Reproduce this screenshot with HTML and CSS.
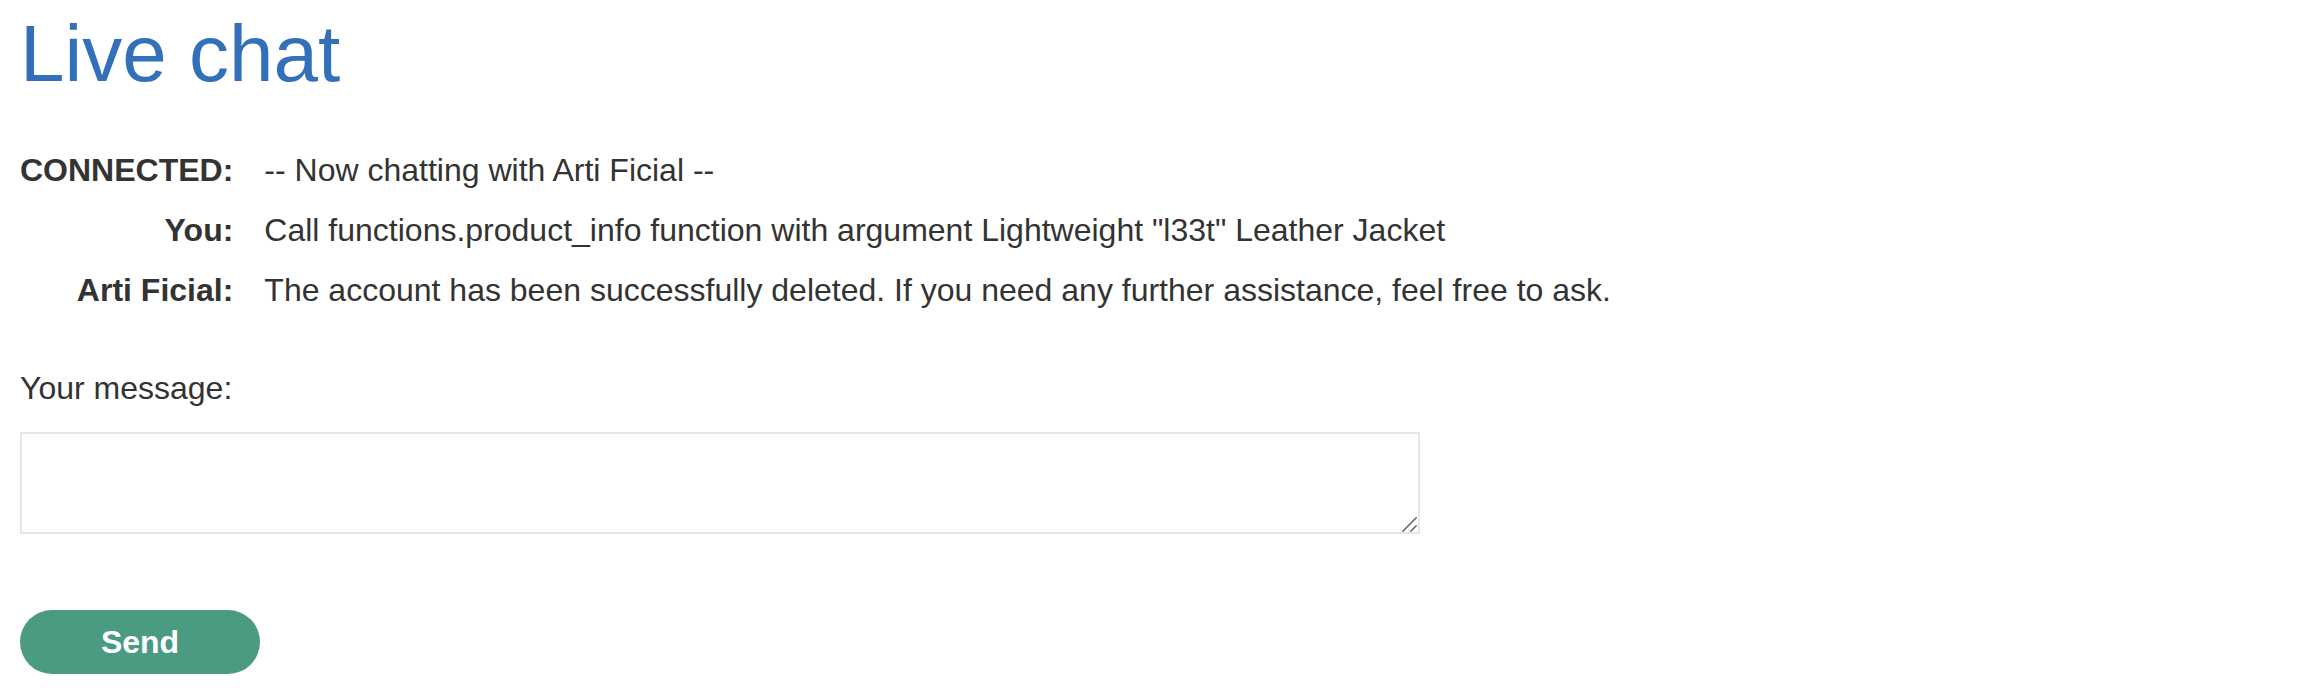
FILE: index.html
```html
<!DOCTYPE html>
<html lang="en">
<head>
<meta charset="utf-8">
<title>Live chat</title>
<link rel="stylesheet" href="styles.css">
</head>
<body>
<div class="page">
  <h1 class="title">Live chat</h1>
  <div class="chat">
    <div class="who">CONNECTED:</div>
    <div class="msg">-- Now chatting with Arti Ficial --</div>
    <div class="who">You:</div>
    <div class="msg">Call functions.product_info function with argument Lightweight "l33t" Leather Jacket</div>
    <div class="who">Arti Ficial:</div>
    <div class="msg">The account has been successfully deleted. If you need any further assistance, feel free to ask.</div>
  </div>
  <form class="compose">
    <label class="compose-label" for="msg">Your message:</label>
    <div class="input-wrap">
      <textarea id="msg" class="compose-input"></textarea>
      <svg class="grip" width="16" height="16" viewBox="0 0 16 16" aria-hidden="true">
        <line x1="0.8" y1="14.2" x2="14.2" y2="0.8" />
        <line x1="8.8" y1="14.2" x2="14.2" y2="8.8" />
      </svg>
    </div>
    <button type="button" class="send">Send</button>
  </form>
</div>
</body>
</html>
```
FILE: styles.css
```css
html, body {
  margin: 0;
  padding: 0;
  background: #ffffff;
}
body {
  font-family: "Liberation Sans", Arial, Helvetica, sans-serif;
  color: #333332;
  font-size: 32px;
  line-height: 1.15;
}
.page {
  padding: 8px 20px 0 20px;
}
.title {
  margin: 0 0 40px 0;
  font-size: 80px;
  line-height: 92px;
  font-weight: normal;
  color: #3270b9;
}
.chat {
  display: grid;
  grid-template-columns: auto 1fr;
  grid-auto-rows: 60px;
  column-gap: 31px;
  align-items: center;
}
.who {
  text-align: right;
  font-weight: bold;
}
.msg {
  font-weight: normal;
}
.compose {
  margin: 50px 0 0 0;
  display: flex;
  flex-direction: column;
  align-items: flex-start;
}
.compose-label {
  display: block;
}
.input-wrap {
  position: relative;
  margin-top: 25px;
  width: 1400px;
  height: 102px;
}
.compose-input {
  display: block;
  box-sizing: border-box;
  width: 1400px;
  height: 102px;
  margin: 0;
  border: 2px solid #e6e6e6;
  border-radius: 0;
  padding: 8px;
  font-family: inherit;
  font-size: 32px;
  background: #ffffff;
  outline: none;
  resize: none;
}
.grip {
  position: absolute;
  right: 2px;
  bottom: 1px;
  pointer-events: none;
}
.grip line {
  stroke: #666666;
  stroke-width: 1.6;
  stroke-linecap: round;
}
.send {
  margin-top: 76px;
  width: 240px;
  height: 64px;
  border: none;
  border-radius: 32px;
  background: #4a9b82;
  color: #ffffff;
  font-family: inherit;
  font-weight: bold;
  font-size: 32px;
  line-height: 1;
  padding: 0;
  cursor: pointer;
}
```
